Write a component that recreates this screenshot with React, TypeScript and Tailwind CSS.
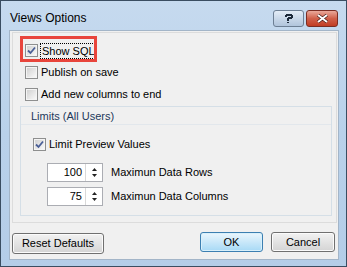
function Check({ checked }: { checked?: boolean }) {
  return (
    <span className="w-[13px] h-[13px] border border-[#8e8f8f] bg-[#f4f4f4] flex items-center justify-center shrink-0">
      <span className="w-[11px] h-[11px] border border-[#f4f4f4] bg-gradient-to-br from-[#d2d2d2] to-[#f8f8f8] flex items-center justify-center">
        {checked && (
          <svg width="9" height="9" viewBox="0 0 9 9">
            <path d="M1 4.5 L3.5 7 L8 1.5" fill="none" stroke="#4a5f97" strokeWidth="1.8" />
          </svg>
        )}
      </span>
    </span>
  );
}

function Spinner({ value, label }: { value: string; label: string }) {
  return (
    <div className="flex items-center">
      <div className="w-[56px] h-[19px] border border-[#abadb3] bg-white flex">
        <span className="flex-1 text-right pr-[3px] leading-[17px]">{value}</span>
        <span className="w-[17px] border-l border-[#d9d9d9] flex flex-col items-center justify-center gap-[3px]">
          <svg width="5" height="3" viewBox="0 0 5 3">
            <path d="M2.5 0 L5 3 L0 3 Z" fill="#222" />
          </svg>
          <svg width="5" height="3" viewBox="0 0 5 3">
            <path d="M0 0 L5 0 L2.5 3 Z" fill="#222" />
          </svg>
        </span>
      </div>
      <span className="ml-[8px]">{label}</span>
    </div>
  );
}

function Button({ children, primary, className }: { children: React.ReactNode; primary?: boolean; className?: string }) {
  return (
    <button
      className={
        'rounded-[3px] border ' +
        (primary
          ? 'border-[#3c7fb1] bg-gradient-to-b from-[#eaf6fd] to-[#a7d9f5] shadow-[inset_0_0_0_1px_#d8f0fb] '
          : 'border-[#707070] bg-gradient-to-b from-[#f2f2f2] to-[#d4d4d4] shadow-[inset_0_0_0_1px_#fbfbfb] ') +
        (className ?? '')
      }
    >
      {children}
    </button>
  );
}

export default function App() {
  return (
    <div
      className="w-[347px] h-[267px] border border-[#3a4d61] bg-gradient-to-b from-[#c6daef] via-[#b9d1ea] to-[#b4cde8] flex flex-col text-[11px] text-black"
      style={{ fontFamily: '"Liberation Sans", Arial, sans-serif' }}
    >
      {/* title bar */}
      <div className="h-[29px] flex items-start justify-between pl-[9px] pr-[8px]">
        <span className="mt-[10px] text-[12px] leading-[14px]">Views Options</span>
        <div className="flex gap-[2px] mt-[9px]">
          <span className="w-[31px] h-[17px] rounded-[3px] border border-[#6d7f94] bg-gradient-to-b from-[#e4edf7] via-[#c9d8e9] to-[#b1c5dc] flex items-center justify-center">
            <svg width="9" height="9" viewBox="0 0 9 9" shapeRendering="crispEdges">
              <path d="M1 0h7v1h1v3h-1v1h-3v2h-2v-3h1v-1h3v-1h-4v1h-2v-2h1z M3 8h2v1h-2z" fill="#1d2a3a" />
            </svg>
          </span>
          <span className="w-[32px] h-[17px] rounded-[3px] border border-[#7a2d23] bg-gradient-to-b from-[#e9a99b] via-[#d0604a] to-[#c13c23] flex items-center justify-center">
            <svg width="13" height="9" viewBox="0 0 13 9">
              <path d="M2 1 L11 8 M11 1 L2 8" stroke="#3b1410" strokeWidth="3.2" />
              <path d="M2 1 L11 8 M11 1 L2 8" stroke="#ffffff" strokeWidth="2" />
            </svg>
          </span>
        </div>
      </div>

      {/* client */}
      <div className="flex-1 ml-[8px] mr-[7px] mb-[6px] border border-[#a3b5c8] bg-[#f0f0f0] flex flex-col">
        <div className="mt-[1px] ml-[2px] mr-[1px] h-[191px] border border-[#dcdcdc] pl-[7px] pr-[4px] pt-[11px]">
          <div className="flex flex-col gap-[9px] pl-[5px]">
            <div className="relative flex items-center gap-[2px] h-[13px]">
              <div className="absolute left-[-5px] top-[-8px] w-[77px] h-[26px] border-[3px] border-[#e8453c]" />
              <Check checked />
              <span className="border border-dotted border-[#000] px-[1px] leading-[14px]">Show SQL</span>
            </div>
            <div className="flex items-center gap-[3px] h-[13px]">
              <Check />
              <span>Publish on save</span>
            </div>
            <div className="flex items-center gap-[3px] h-[13px]">
              <Check />
              <span>Add new columns to end</span>
            </div>
          </div>

          <div className="mt-[5px] h-[110px] border border-[#d5dfe7]">
            <div className="h-[18px] border-b border-[#e2e7ec] pl-[10px] text-[#1e395b] leading-[18px]">
              Limits (All Users)
            </div>
            <div className="pl-[12px] pt-[13px]">
              <div className="flex items-center gap-[3px] h-[13px]">
                <Check checked />
                <span>Limit Preview Values</span>
              </div>
              <div className="ml-[14px] mt-[12px] flex flex-col gap-[5px]">
                <Spinner value="100" label="Maximun Data Rows" />
                <Spinner value="75" label="Maximun Data Columns" />
              </div>
            </div>
          </div>
        </div>

        <div className="flex-1 flex items-start pl-[2px] pt-[9px]">
          <Button className="h-[21px] w-[92px] mt-[1px]">Reset Defaults</Button>
          <div className="ml-auto flex gap-[8px] mr-[3px]">
            <Button primary className="h-[20px] w-[63px]">OK</Button>
            <Button className="h-[20px] w-[64px]">Cancel</Button>
          </div>
        </div>
      </div>
    </div>
  );
}
